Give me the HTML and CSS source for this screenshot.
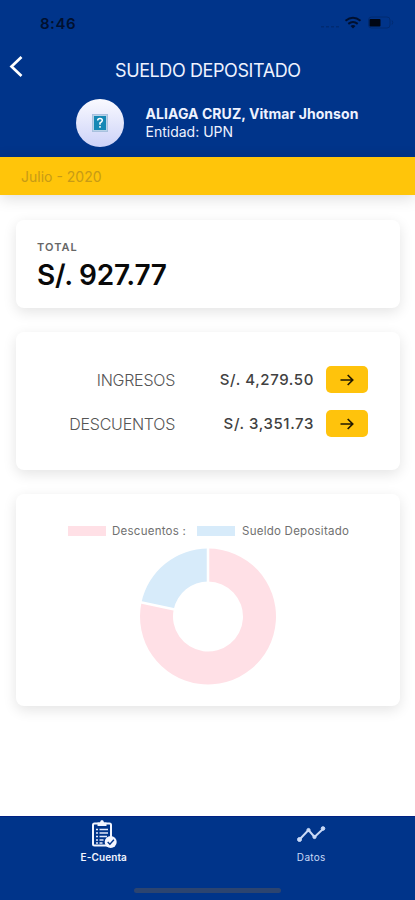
FILE: index.html
```html
<!DOCTYPE html>
<html lang="es">
<head>
<meta charset="utf-8">
<meta name="viewport" content="width=device-width, initial-scale=1">
<title>Sueldo depositado</title>
<link rel="stylesheet" href="styles.css">
</head>
<body>
<header class="header">
  <div class="status">
    <span class="time">8:46</span>
    <svg class="status-icons" width="76" height="16" viewBox="0 0 76 16">
      <g fill="#002a72"><rect x="1" y="11" width="3" height="1.500"/><rect x="6" y="11" width="3" height="1.500"/><rect x="11" y="11" width="3" height="1.500"/><rect x="16" y="11" width="3" height="1.500"/></g>
      <g fill="none" stroke="#00102f" stroke-width="2"><path d="M25.500 5.800q7.500-6 15 0M28.300 8.900q4.700-3.700 9.400 0"/></g>
      <path d="M30.500 11q2.500-2 5 0L33 13.500z" fill="#00102f"/>
      <rect x="48.500" y="2" width="21.500" height="11" rx="3" fill="none" stroke="#002a70"/>
      <path d="M72 5.500q1.500 2 0 4" fill="none" stroke="#002a70"/>
      <rect x="49.500" y="4" width="11" height="7.500" rx="1" fill="#000614"/>
    </svg>
  </div>
  <div class="titlebar">
    <svg class="back" width="16" height="24" viewBox="0 0 16 24"><path d="M13.500 2L3.500 11.500l10 9.500" fill="none" stroke="#fff" stroke-width="2.700"/></svg>
    <h1 class="title">SUELDO DEPOSITADO</h1>
  </div>
  <div class="profile">
    <div class="avatar">
      <svg width="16" height="18" viewBox="0 0 16 18"><rect x=".5" y=".5" width="15" height="17" fill="#b9d3e8" stroke="#a9c1df"/><rect x="2" y="2" width="12" height="14" fill="#1688b5"/><path d="M5.700 6.600Q5.700 4.500 8 4.500t2.300 2Q10.300 7.700 8 9v1.700M8 12v1.700" fill="none" stroke="#fff" stroke-width="1.500"/></svg>
    </div>
    <div class="who">
      <div class="name">ALIAGA CRUZ, Vitmar Jhonson</div>
      <div class="entity">Entidad: UPN</div>
    </div>
  </div>
</header>
<div class="period"><span class="period-text">Julio - 2020</span></div>
<main class="content">
  <section class="card total">
    <div class="total-label">TOTAL</div>
    <div class="total-value">S/. 927.77</div>
  </section>
  <section class="card rows">
    <div class="row">
      <span class="label">INGRESOS</span><span class="amount">S/. 4,279.50</span>
      <span class="go"><svg width="16" height="14" viewBox="0 0 16 14"><path d="M1.500 7h12M8.700 2l5 5-5 5" fill="none" stroke="#211900" stroke-width="1.700"/></svg></span>
    </div>
    <div class="row">
      <span class="label">DESCUENTOS</span><span class="amount">S/. 3,351.73</span>
      <span class="go"><svg width="16" height="14" viewBox="0 0 16 14"><path d="M1.500 7h12M8.700 2l5 5-5 5" fill="none" stroke="#211900" stroke-width="1.700"/></svg></span>
    </div>
  </section>
  <section class="card chart">
    <div class="legend">
      <span class="swatch pink"></span><span class="legend-a">Descuentos :</span>
      <span class="swatch blue"></span><span class="legend-b">Sueldo Depositado</span>
    </div>
    <svg class="donut" width="138" height="138" viewBox="-69 -69.500 138 138">
      <path d="M0-68A68 68 0 1 1-66.530-14.080L-34.240-7.250A35 35 0 1 0 0-35z" fill="#ffe0e6"/>
      <path d="M-66.530-14.080A68 68 0 0 1 0-68V-35A35 35 0 0 0-34.240-7.250z" fill="#d7ebfa"/>
      <path d="M0-69V-34M-67.500-14.300L-33.300-7.050" stroke="#fff" stroke-width="2.500"/>
    </svg>
  </section>
</main>
<footer class="tabs">
  <div class="tab-row">
    <div class="tab active">
      <svg width="30" height="32" viewBox="0 0 30 32"><rect x="4" y="4.500" width="18" height="22" rx="1.500" fill="none" stroke="#f2f5ff" stroke-width="2"/><path d="M8.500 7V3.500H11q.2-2.500 2-2.500t2 2.500h2.500V7z" fill="#f2f5ff"/><path d="M7 10.500h2m1.500 0H19M7 14h2m1.500 0H19M7 17.500h2m1.500 0H18M7 21h2m1.500 0h4M7 24h2m1.500 0h3" stroke="#e3e9fb" stroke-width="1.700"/><circle cx="21.700" cy="23" r="6" fill="#f4f6ff"/><path d="M18.700 23l2.200 2.200 4-4.400" fill="none" stroke="#00348a" stroke-width="1.400"/></svg>
      <span class="tab-a">E-Cuenta</span>
    </div>
    <div class="tab">
      <svg width="30" height="32" viewBox="0 0 30 32"><g fill="#c9d9f7" stroke="#c9d9f7"><path d="M3.500 20.500l9-9.500 6 7L27 10" fill="none" stroke-width="2"/><circle cx="3.500" cy="20.500" r="2"/><circle cx="12.500" cy="11" r="1.600"/><circle cx="18.500" cy="18" r="1.600"/><circle cx="27" cy="9.500" r="1.800"/></g></svg>
      <span class="tab-b">Datos</span>
    </div>
  </div>
  <div class="home"></div>
</footer>
</body>
</html>
```
FILE: styles.css
```css
* { box-sizing: border-box; }
body { margin: 0; width: 415px; height: 900px; overflow: hidden; display: flex; flex-direction: column; background: #fff; font-family: Inter, "Liberation Sans", sans-serif; white-space: nowrap; }
svg { display: block; flex: none; }
.header { height: 157px; flex: none; background: #00348a; color: #eef2ff; }
.status { height: 46px; padding: 15px 19px 0 40px; display: flex; justify-content: space-between; align-items: flex-start; }
.time { font-size: 15px; line-height: 18px; font-weight: 600; color: #00102f; letter-spacing: .5px; }
.titlebar { height: 48px; padding: 9px 0 0 8px; display: flex; align-items: flex-start; }
.title { margin: 4px 0 0 91px; font-size: 18px; line-height: 24px; font-weight: 400; letter-spacing: -.4px; }
.profile { display: flex; padding: 5px 0 0 76px; }
.avatar { width: 48px; height: 48px; border-radius: 50%; background: linear-gradient(#fafaff, #ccd2f8); display: flex; align-items: center; justify-content: center; }
.who { margin: 6px 0 0 21.5px; font-size: 14px; line-height: 18px; }
.name { font-weight: 700; letter-spacing: .06px; }
.period { height: 38px; flex: none; background: #ffc50a; padding: 10px 0 0 21px; font-size: 14px; line-height: 19px; color: #c79b16; box-shadow: 0 3px 16px rgba(0,0,0,.14); }
.content { flex: 1; padding: 25px 15px 0 16px; display: flex; flex-direction: column; gap: 24px; }
.card { background: #fff; border-radius: 8px; box-shadow: 0 4px 14px rgba(0,0,0,.11); flex: none; }
.total { height: 88px; padding: 20px 21px 0; }
.total-label { font-size: 11px; line-height: 15px; font-weight: 600; color: #666; letter-spacing: 1.05px; }
.total-value { font-size: 28px; line-height: 34px; margin-top: 3px; font-weight: 600; color: #090909; letter-spacing: -.25px; }
.rows { height: 138px; padding: 34px 32px 0 20px; display: flex; flex-direction: column; gap: 17px; }
.row { height: 27px; display: grid; grid-template-columns: 139px 139px 42px; justify-content: space-between; align-items: center; }
.label { font-size: 16px; font-weight: 300; color: #555; text-align: right; letter-spacing: -.25px; }
.amount { font-size: 15px; font-weight: 500; color: #414141; text-align: right; letter-spacing: .6px; padding-right: 6px; }
.go { height: 27px; border-radius: 5px; background: #ffc30c; display: flex; align-items: center; justify-content: center; padding-right: 1px; }
.chart { height: 212px; padding-top: 30px; }
.legend { display: flex; align-items: center; height: 14px; margin-left: 52px; font-size: 11.5px; letter-spacing: .25px; color: #707070; }
.swatch { width: 38px; height: 10px; flex: none; }
.pink { background: #ffe0e6; margin-right: 6px; }
.blue { background: #d7ebfa; margin-right: 7px; }
.legend-a { width: 85px; }
.donut { margin: 9px 0 0 123px; }
.tabs { height: 84px; flex: none; background: #00348a; border-top: 1px solid #002183; }
.tab-row { display: grid; grid-template-columns: 1fr 1fr; height: 71px; }
.tab { display: flex; flex-direction: column; align-items: center; color: #c9d9f7; font-size: 10px; line-height: 13px; padding-top: 2px; letter-spacing: .3px; }
.active { color: #f2f5ff; font-weight: 600; letter-spacing: .1px; }
.home { width: 147px; height: 5px; border-radius: 3px; background: #2c4470; margin: 0 auto; }
```
